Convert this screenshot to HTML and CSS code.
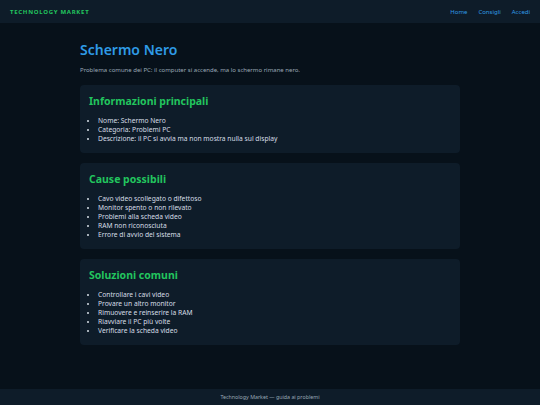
FILE: index.html
```html
<!DOCTYPE html>
<html lang="it">
<head>
    <meta charset="UTF-8">
    <meta name="viewport" content="width=device-width, initial-scale=1.0">
    <title>Schermo Nero - Technology Market</title>
    <link rel="stylesheet" href="styles.css">
</head>
<body>
    <header class="site-header">
        <div class="logo">Technology Market</div>
        <nav class="nav">
            <a href="#">Home</a>
            <a href="#">Consigli</a>
            <a href="#">Accedi</a>
        </nav>
    </header>

    <main class="page">
        <h1 class="page-title">Schermo Nero</h1>
        <p class="page-intro">Problema comune dei PC: il computer si accende, ma lo schermo rimane nero.</p>

        <section class="card">
            <h2 class="card-title">Informazioni principali</h2>
            <ul>
                <li>Nome: Schermo Nero</li>
                <li>Categoria: Problemi PC</li>
                <li>Descrizione: il PC si avvia ma non mostra nulla sul display</li>
            </ul>
        </section>

        <section class="card">
            <h2 class="card-title">Cause possibili</h2>
            <ul>
                <li>Cavo video scollegato o difettoso</li>
                <li>Monitor spento o non rilevato</li>
                <li>Problemi alla scheda video</li>
                <li>RAM non riconosciuta</li>
                <li>Errore di avvio del sistema</li>
            </ul>
        </section>

        <section class="card">
            <h2 class="card-title">Soluzioni comuni</h2>
            <ul>
                <li>Controllare i cavi video</li>
                <li>Provare un altro monitor</li>
                <li>Rimuovere e reinserire la RAM</li>
                <li>Riavviare il PC più volte</li>
                <li>Verificare la scheda video</li>
            </ul>
        </section>
    </main>

    <footer class="site-footer">Technology Market — guida ai problemi</footer>
</body>
</html>
```

FILE: styles.css
```css
:root {
    --bg: #07111a;
    --panel: #0e1c29;
    --green: #22c55e;
    --blue: #2f9be6;
    --text: #d6dee6;
    --muted: #9aa8b6;
}

* {
    box-sizing: border-box;
}

html, body {
    height: 100%;
}

body {
    margin: 0;
    display: flex;
    flex-direction: column;
    font-family: "Noto Sans", "Open Sans", sans-serif;
    background: var(--bg);
    color: var(--text);
}

.site-header {
    display: flex;
    justify-content: space-between;
    align-items: center;
    height: 23px;
    padding: 0 10px;
    background: var(--panel);
}

.logo {
    color: var(--green);
    font-size: 6px;
    font-weight: 700;
    text-transform: uppercase;
    letter-spacing: 0.12em;
}

.nav {
    display: flex;
    gap: 11px;
}

.nav a {
    color: var(--blue);
    font-size: 6px;
    text-decoration: none;
}

.page {
    flex: 1;
    width: 380px;
    margin: 0 auto;
    padding-top: 17px;
}

.page-title {
    margin: 0;
    color: var(--blue);
    font-size: 14px;
    font-weight: 600;
    line-height: 19px;
}

.page-intro {
    margin: 7px 0 10px;
    color: var(--muted);
    font-size: 6px;
    line-height: 9px;
}

.card {
    background: var(--panel);
    border-radius: 4px;
    padding: 9px 9px 10px;
    margin-bottom: 10px;
}

.card-title {
    margin: 0 0 8px;
    color: var(--green);
    font-size: 10.5px;
    font-weight: 700;
    line-height: 14px;
}

.card ul {
    margin: 0;
    padding-left: 9px;
}

.card li {
    font-size: 6.7px;
    line-height: 9px;
}

.site-footer {
    height: 16px;
    display: flex;
    align-items: center;
    justify-content: center;
    background: var(--panel);
    color: var(--muted);
    font-size: 5.3px;
}
```
